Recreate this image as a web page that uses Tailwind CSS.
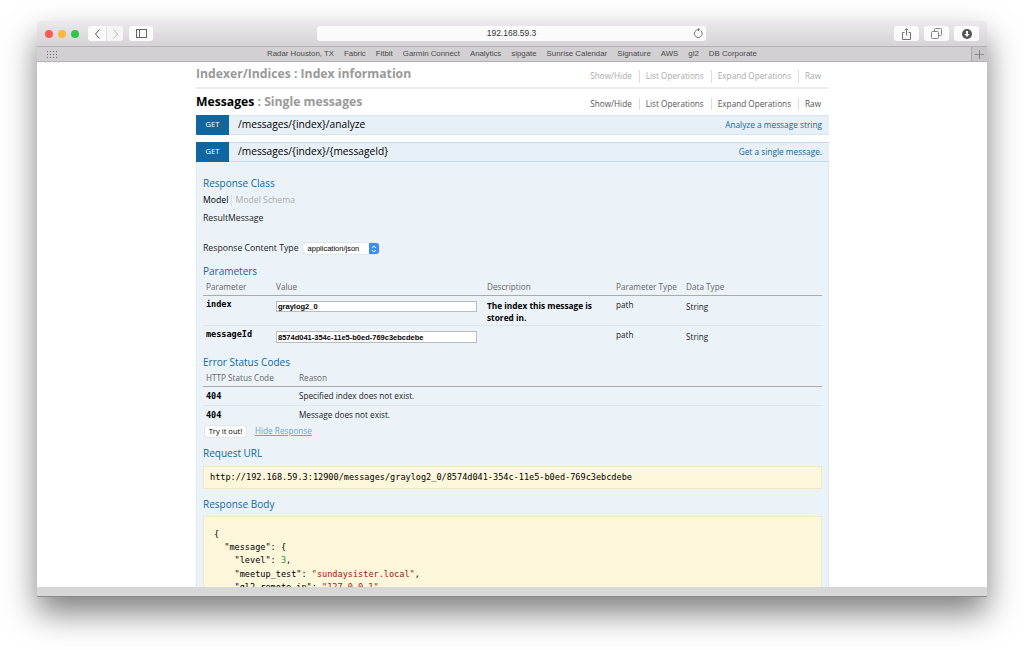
<!DOCTYPE html>
<html lang="en">
<head>
    <meta charset="UTF-8">
    <meta name="viewport" content="width=device-width, initial-scale=1.0">
    <title>Get a single message</title>
    <script src="https://cdn.jsdelivr.net/npm/@tailwindcss/browser@4"></script>
</head>
<body class="bg-white h-[650px] overflow-hidden pt-[21px] pl-[37px] font-['Open_Sans',sans-serif]">
    <div class="w-[950px] h-[576px] flex flex-col rounded-t-[4px] shadow-[0_16px_32px_rgba(0,0,0,0.5)] bg-white">
        <!-- toolbar -->
        <div class="h-[26px] shrink-0 flex items-center relative rounded-t-[4px] bg-gradient-to-b from-[#ebe9eb] to-[#d5d3d5] border-b border-[#b4b2b4] pl-[8px]">
            <div class="flex gap-[5px]">
                <span class="w-[8px] h-[8px] rounded-full bg-[#fc5b57]"></span>
                <span class="w-[8px] h-[8px] rounded-full bg-[#fdb83b]"></span>
                <span class="w-[8px] h-[8px] rounded-full bg-[#32c648]"></span>
            </div>
            <div class="flex ml-[9px] gap-px">
                <div class="w-[18px] h-[15px] bg-[#fbfbfb] rounded-l-[3px] flex items-center justify-center">
                    <svg width="7" height="10" viewBox="0 0 7 10" fill="none" stroke="#555" stroke-width="1"><path d="M5.5 0.5 L1.5 5 L5.5 9.5"/></svg>
                </div>
                <div class="w-[16px] h-[15px] bg-[#f6f6f6] rounded-r-[3px] flex items-center justify-center">
                    <svg width="7" height="10" viewBox="0 0 7 10" fill="none" stroke="#bbb" stroke-width="1"><path d="M1.5 0.5 L5.5 5 L1.5 9.5"/></svg>
                </div>
            </div>
            <div class="w-[24px] h-[15px] ml-[6px] bg-[#fbfbfb] rounded-[3px] flex items-center justify-center">
                <svg width="11" height="9" viewBox="0 0 11 9" fill="none" stroke="#666" stroke-width="1"><rect x="0.5" y="0.5" width="10" height="8"/><path d="M3.5 0.5 V8.5"/></svg>
            </div>
            <div class="w-[389px] h-[15px] ml-[164px] bg-[#fbfbfb] rounded-[3px] relative flex items-center justify-center font-['Liberation_Sans',sans-serif] text-[8.5px] text-[#333]">
                192.168.59.3
                <svg class="absolute right-[2px] top-[2px]" width="11" height="11" viewBox="0 0 11 11" fill="none" stroke="#666" stroke-width="0.9"><path d="M7.8 2.6 A3.9 3.9 0 1 1 5 1.7"/><path d="M5 0 L7.2 1.7 L5 3.2" fill="#666" stroke="none"/></svg>
            </div>
            <div class="w-[25px] h-[15px] ml-[188px] bg-[#fbfbfb] rounded-[3px] flex items-center justify-center">
                <svg width="9" height="12" viewBox="0 0 9 12" fill="none" stroke="#666" stroke-width="0.9"><path d="M2.5 4.5 H0.5 V11.5 H8.5 V4.5 H6.5"/><path d="M4.5 7.5 V0.8 M2.7 2.4 L4.5 0.6 L6.3 2.4"/></svg>
            </div>
            <div class="w-[25px] h-[15px] ml-[5px] bg-[#fbfbfb] rounded-[3px] flex items-center justify-center">
                <svg width="11" height="11" viewBox="0 0 11 11" fill="none" stroke="#777" stroke-width="0.9"><rect x="3.5" y="0.5" width="7" height="7" rx="1"/><rect x="0.5" y="3.5" width="7" height="7" rx="1" fill="#fbfbfb"/></svg>
            </div>
            <div class="w-[25px] h-[15px] ml-[5px] bg-[#fbfbfb] rounded-[3px] flex items-center justify-center">
                <svg width="10" height="10" viewBox="0 0 10 10"><circle cx="5" cy="5" r="5" fill="#555"/><path d="M4 2 H6 V5 H7.6 L5 8 L2.4 5 H4 Z" fill="#fff"/></svg>
            </div>
        </div>
        <!-- bookmarks -->
        <div class="h-[15px] shrink-0 flex items-center bg-[#d2d0d2] border-b border-[#b4b2b4] font-['Liberation_Sans',sans-serif] text-[7.85px] text-[#4a4a4a]">
            <svg class="ml-[10px] shrink-0" width="10" height="7" viewBox="0 0 10 7" fill="#666"><path d="M0 0h1v1H0zM3 0h1v1H3zM6 0h1v1H6zM9 0h1v1H9zM0 3h1v1H0zM3 3h1v1H3zM6 3h1v1H6zM9 3h1v1H9zM0 6h1v1H0zM3 6h1v1H3zM6 6h1v1H6zM9 6h1v1H9z"/></svg>
            <div class="ml-[210px] flex gap-[10px] whitespace-nowrap">
                <span>Radar Houston, TX</span><span>Fabric</span><span>Fitbit</span><span>Garmin Connect</span><span>Analytics</span><span>sipgate</span><span>Sunrise Calendar</span><span>Signature</span><span>AWS</span><span>gl2</span><span>DB Corporate</span>
            </div>
            <div class="ml-auto w-[16px] h-full border-l border-[#aaa] flex items-center justify-center bg-[#c8c6c8] text-[#888]">
                <svg width="9" height="9" viewBox="0 0 9 9" stroke="#888" stroke-width="1"><path d="M4.5 0 V9 M0 4.5 H9"/></svg>
            </div>
        </div>
        <!-- page -->
        <div class="h-[525px] shrink-0 overflow-hidden bg-white pl-[159px]">
            <div class="w-[633px] text-[8.2px] text-[#333]">
                <div class="h-[27px] flex items-center justify-between border-b-2 border-[#eee] pb-[2px]">
                    <h2 class="text-[12.2px] font-bold text-[#999] pt-[2px]">Indexer/Indices : Index information</h2>
                    <ul class="flex items-center pr-[8px] pt-[6px] text-[#aaa]">
                        <li>Show/Hide</li>
                        <li class="ml-[7px] pl-[6px] border-l border-[#ddd]">List Operations</li>
                        <li class="ml-[7px] pl-[6px] border-l border-[#ddd]">Expand Operations</li>
                        <li class="ml-[7px] pl-[6px] border-l border-[#ddd]">Raw</li>
                    </ul>
                </div>
                <div class="h-[26px] flex items-center justify-between">
                    <h2 class="text-[12.2px] font-bold text-[#999] pt-[1px]"><span class="text-black">Messages</span> : Single messages</h2>
                    <ul class="flex items-center pr-[8px] pt-[4px] text-[#555]">
                        <li>Show/Hide</li>
                        <li class="ml-[7px] pl-[6px] border-l border-[#ddd]">List Operations</li>
                        <li class="ml-[7px] pl-[6px] border-l border-[#ddd]">Expand Operations</li>
                        <li class="ml-[7px] pl-[6px] border-l border-[#ddd]">Raw</li>
                    </ul>
                </div>
                <!-- analyze -->
                <div class="h-[20px] flex items-center bg-[#e7f0f7] border-y border-[#d6e5f2]">
                    <span class="w-[33px] h-[20px] -my-px bg-[#10679f] text-white text-[7.5px] flex items-center justify-center rounded-bl-[1px]">GET</span>
                    <span class="ml-[9px] text-[10.2px] text-black">/messages/{index}/analyze</span>
                    <span class="ml-auto pr-[7px] text-[#10679f] text-[8.3px]">Analyze a message string</span>
                </div>
                <!-- single message -->
                <div class="h-[20px] mt-[7px] flex items-center bg-[#e7f0f7] border-y border-[#c3d9ec]">
                    <span class="w-[33px] h-[20px] -my-px bg-[#10679f] text-white text-[7.5px] flex items-center justify-center">GET</span>
                    <span class="ml-[9px] text-[10.2px] text-black">/messages/{index}/{messageId}</span>
                    <span class="ml-auto pr-[7px] text-[#10679f] text-[8.3px]">Get a single message.</span>
                </div>
                <div class="bg-[#ebf3f9] border-x border-[#dae8f3] pl-[6px] pr-[6px] pt-[14px] h-[425px] text-[#222]">
                    <h4 class="h-[14px] flex items-center text-[#10679f] text-[10px]">Response Class</h4>
                    <div class="h-[11px] mt-[5px] flex items-center text-[8.7px]">
                        <span class="text-black pr-[3px] border-r border-[#d5dee6] leading-[11px]">Model</span>
                        <span class="pl-[3px] text-[#aaa]">Model Schema</span>
                    </div>
                    <div class="h-[12px] mt-[7px] flex items-center text-[8.7px]">ResultMessage</div>
                    <div class="h-[13px] mt-[17px] flex items-center text-[8.7px]">
                        <span>Response Content Type</span>
                        <span class="ml-[4px] w-[76px] h-[11px] bg-white rounded-[3px] shadow-[0_0_1px_rgba(0,0,0,0.45)] flex items-center pl-[5px] font-['Liberation_Sans',sans-serif] text-[7.5px] text-black relative">application/json
                            <span class="absolute right-0 top-0 w-[10px] h-[11px] bg-[#3d8ff0] rounded-r-[3px] flex items-center justify-center">
                                <svg width="6" height="8" viewBox="0 0 6 8" fill="none" stroke="#fff" stroke-width="1"><path d="M1 3 L3 1 L5 3 M1 5 L3 7 L5 5"/></svg>
                            </span>
                        </span>
                    </div>
                    <h4 class="h-[14px] mt-[9px] flex items-center text-[#10679f] text-[10px]">Parameters</h4>
                    <!-- parameters table -->
                    <div class="grid grid-cols-[70px_211px_129px_70px_1fr] h-[17px] mt-[1px] pl-[3px] items-center border-b border-[#aaa] text-[#666]">
                        <span>Parameter</span><span>Value</span><span>Description</span><span>Parameter Type</span><span>Data Type</span>
                    </div>
                    <div class="grid grid-cols-[70px_211px_129px_70px_1fr] h-[30px] pl-[3px] border-b border-[#dde5eb] pt-[2px]">
                        <span class="font-['DejaVu_Sans_Mono',monospace] font-bold text-[8.5px] text-black leading-[12px]">index</span>
                        <input type="text" value="graylog2_0" class="w-[201px] h-[11px] mt-[3px] bg-white border border-[#bbb] px-[1px] font-['Liberation_Sans',sans-serif] font-bold text-[7.5px] text-black">
                        <span class="font-bold text-black text-[8.3px] leading-[11.5px] pt-[2px] pr-[2px]">The index this message is stored in.</span>
                        <span class="leading-[12px] pt-[1px]">path</span>
                        <span class="leading-[12px] pt-[3px]">String</span>
                    </div>
                    <div class="grid grid-cols-[70px_211px_129px_70px_1fr] h-[30px] pl-[3px] pt-[2px]">
                        <span class="font-['DejaVu_Sans_Mono',monospace] font-bold text-[8.5px] text-black leading-[12px]">messageId</span>
                        <input type="text" value="8574d041-354c-11e5-b0ed-769c3ebcdebe" class="w-[201px] h-[12px] mt-[3px] bg-white border border-[#bbb] px-[1px] font-['Liberation_Sans',sans-serif] font-bold text-[7.5px] text-black">
                        <span></span>
                        <span class="leading-[12px] pt-[1px]">path</span>
                        <span class="leading-[12px] pt-[3px]">String</span>
                    </div>
                    <h4 class="h-[14px] -mt-[1px] flex items-center text-[#10679f] text-[10px]">Error Status Codes</h4>
                    <!-- status codes table -->
                    <div class="grid grid-cols-[93px_1fr] h-[17px] mt-[1px] pl-[3px] items-center border-b border-[#aaa] text-[#666]">
                        <span>HTTP Status Code</span><span>Reason</span>
                    </div>
                    <div class="grid grid-cols-[93px_1fr] h-[19px] pl-[3px] items-center border-b border-[#dde5eb]">
                        <span class="font-['DejaVu_Sans_Mono',monospace] font-bold text-[8.5px] text-black">404</span>
                        <span>Specified index does not exist.</span>
                    </div>
                    <div class="grid grid-cols-[93px_1fr] h-[19px] pl-[3px] items-center">
                        <span class="font-['DejaVu_Sans_Mono',monospace] font-bold text-[8.5px] text-black">404</span>
                        <span>Message does not exist.</span>
                    </div>
                    <div class="h-[11px] mt-[1px] flex items-center">
                        <button class="w-[41px] h-[11px] ml-[2px] bg-white rounded-[2px] shadow-[0_0_1px_rgba(0,0,0,0.4)] text-[7.6px] text-black flex items-center justify-center">Try it out!</button>
                        <a href="#" class="ml-[9px] underline text-[#6ea3cc]">Hide Response</a>
                    </div>
                    <h4 class="h-[14px] mt-[9px] flex items-center text-[#10679f] text-[10px]">Request URL</h4>
                    <div class="h-[23px] mt-[6px] flex items-center pl-[6px] bg-[#fcf6db] border border-[#f0e8c4] font-['DejaVu_Sans_Mono',monospace] text-[8.55px] text-black">http://192.168.59.3:12900/messages/graylog2_0/8574d041-354c-11e5-b0ed-769c3ebcdebe</div>
                    <h4 class="h-[14px] mt-[8px] flex items-center text-[#10679f] text-[10px]">Response Body</h4>
                    <pre class="h-[100px] mt-[5px] pl-[10px] pt-[11px] bg-[#fcf6db] border border-[#f0e8c4] font-['DejaVu_Sans_Mono',monospace] text-[8.55px] leading-[13.2px] text-black">{
  "message": {
    "level": <span class="text-[#1c9a2e]">3</span>,
    "meetup_test": <span class="text-[#a31515]">"sundaysister.local"</span>,
    "gl2_remote_ip": <span class="text-[#a31515]">"127.0.0.1"</span>,</pre>
                </div>
            </div>
        </div>
        <!-- bottom bar -->
        <div class="h-[10px] shrink-0 bg-[#d8d7d8] border-b border-[#8a8a8a]"></div>
    </div>
</body>
</html>
